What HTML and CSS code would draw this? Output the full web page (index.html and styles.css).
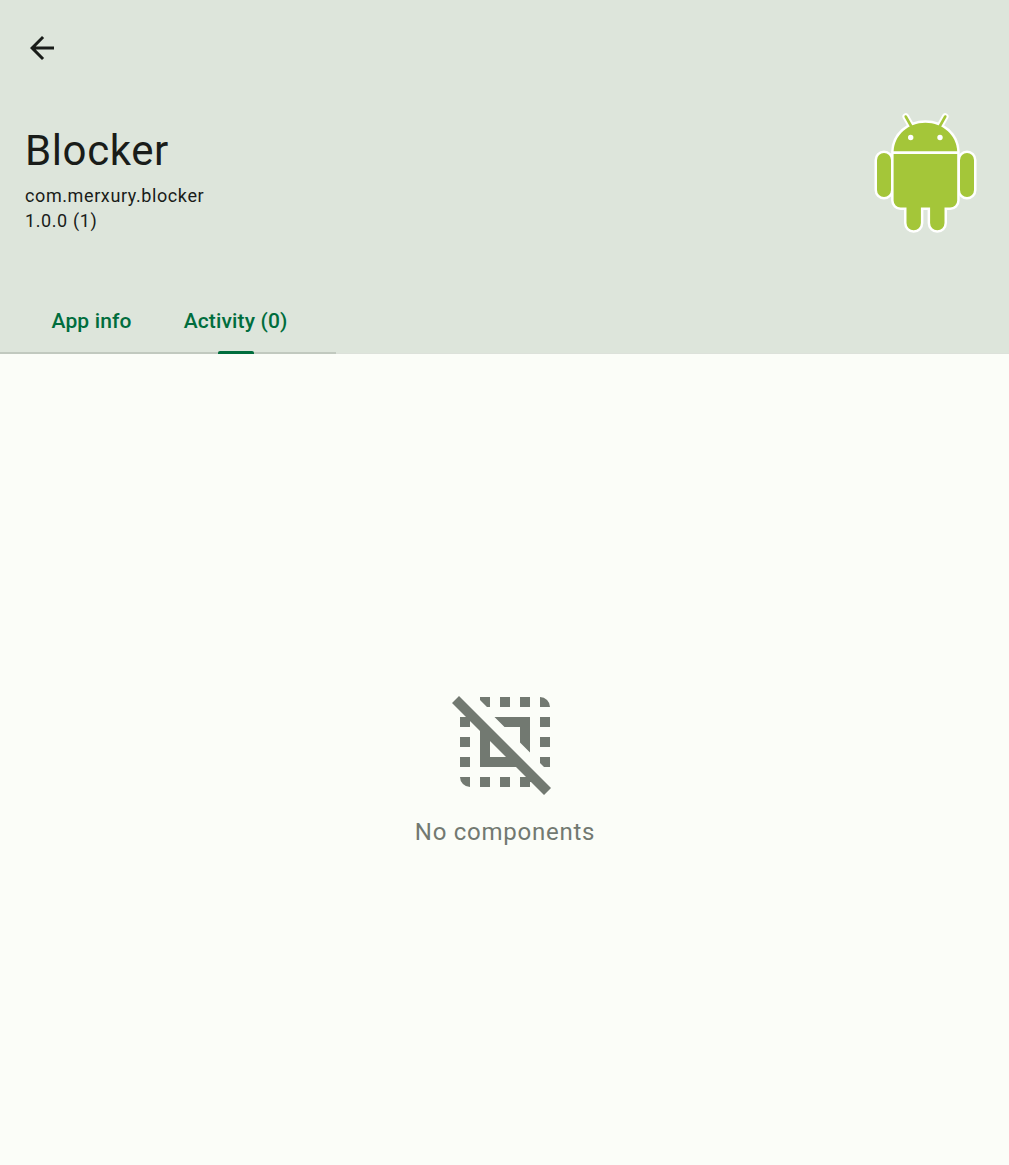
FILE: index.html
```html
<!DOCTYPE html>
<html lang="en">
<head>
<meta charset="utf-8">
<title>Blocker</title>
<link rel="stylesheet" href="styles.css">
</head>
<body>
<header class="header">
  <button class="back" aria-label="Back">
    <svg width="36" height="36" viewBox="0 0 24 24"><path d="M20 11H7.83l5.59-5.59L12 4l-8 8 8 8 1.41-1.41L7.83 13H20v-2z"/></svg>
  </button>
  <div class="summary">
    <div>
      <h1 class="title">Blocker</h1>
      <p class="detail">com.merxury.blocker</p>
      <p class="detail version">1.0.0 (1)</p>
    </div>
    <svg class="robot" width="120" height="135" viewBox="0 0 120 135">
      <g class="antenna-outline"><path d="M40.7 11.5l6.8 12M80.3 11.5l-6.8 12"/></g>
      <g class="robot-part">
        <rect x="12" y="48" width="14" height="44" rx="7"/>
        <rect x="95" y="48" width="14" height="44" rx="7"/>
        <path d="M28.6 46.5C29.2 30 43 17.7 60.4 17.7S91.6 30 92.2 46.5z"/>
        <path d="M28.6 49h63.6v46.5a7 7 0 0 1-7 7h-5.7v15.600a7.200 7.200 0 0 1-14.400 0v-15.600h-9.200v15.600a7.200 7.200 0 0 1-14.400 0v-15.600h-5.900a7 7 0 0 1-7-7z"/>
      </g>
      <path class="antenna" d="M40.7 11.500l6.800 12M80.300 11.500l-6.800 12"/>
      <circle class="eye" cx="45.7" cy="32.5" r="2.700"/>
      <circle class="eye" cx="75" cy="32.5" r="2.700"/>
    </svg>
  </div>
  <nav class="tabs">
    <a class="tab">App info</a>
    <a class="tab selected">Activity (0)</a>
  </nav>
</header>
<main class="empty">
  <svg class="empty-icon" width="120" height="120" viewBox="0 0 120 120">
    <path d="M14 14l92 92-7 7L7 21zM35 15h10v10h-3l-7-7zM55 15h10v10H55zM75 15h10v10H75zM95 15a10 10 0 0 1 10 10H95zM15 35h10v10H15zM15 55h10v10H15zM15 75h10v10H15zM15 95h10v10a10 10 0 0 1-10-10zM35 95h10v10H35zM55 95h10v10H55zM75 95h10v10H75zM95 35h10v10H95zM95 55h10v10H95zM95 75h10v10h-6l-4-4zM49.500 35H85v35.500L75 60.500V45H59.500zM35 45l10 10v20h20l10 10H35z"/>
  </svg>
  <p class="empty-text">No components</p>
</main>
</body>
</html>
```
FILE: styles.css
```css
* { box-sizing: border-box; }
body {
  margin: 0;
  min-height: 1165px;
  display: flex;
  flex-direction: column;
  background: #fbfdf8;
  color: #191c19;
  font-family: Roboto, sans-serif;
}
.header {
  height: 354px;
  display: flex;
  flex-direction: column;
  background: #dde5db;
  border-bottom: 1px solid #dce1da;
}
.back {
  width: 36px;
  height: 36px;
  margin: 30px 0 0 24px;
  padding: 0;
  border: 0;
  background: none;
}
.back svg { display: block; fill: #191c19; }
.summary {
  display: flex;
  justify-content: space-between;
  height: 135px;
  margin-top: 39px;
  padding: 0 24px 0 25px;
}
.title {
  margin: 19px 0 6px;
  font-size: 42px;
  line-height: 54px;
  font-weight: 400;
  letter-spacing: .6px;
}
.detail {
  margin: 0;
  font-size: 18px;
  line-height: 24px;
  letter-spacing: .6px;
}
.version { margin-top: 1px; }
.robot-part { fill: #a4c639; stroke: #fff; stroke-width: 5px; stroke-linejoin: round; paint-order: stroke; }
.antenna, .antenna-outline { fill: none; stroke-linecap: round; }
.antenna { stroke: #a4c639; stroke-width: 2.6px; }
.antenna-outline { stroke: #fff; stroke-width: 6.6px; }
.eye { fill: #fff; }
.tabs {
  display: flex;
  width: 336px;
  height: 72px;
  margin: auto 0 -1px;
  padding-left: 25.5px;
  border-bottom: 2px solid #c1c9bf;
}
.tab {
  position: relative;
  padding: 0 26px;
  color: #006d3d;
  font-size: 21px;
  line-height: 78px;
  font-weight: 500;
  letter-spacing: .15px;
}
.selected::after {
  content: "";
  position: absolute;
  bottom: -2px;
  left: calc(50% - 18px);
  width: 36px;
  height: 3.5px;
  border-radius: 2px 2px 0 0;
  background: #006d3d;
}
.empty {
  flex: 1;
  display: flex;
  flex-direction: column;
  align-items: center;
  padding-top: 328px;
}
.empty-icon { fill: #727971; }
.empty-text {
  margin: 12px 0 0;
  padding-left: 1px;
  color: #727971;
  font-size: 24px;
  line-height: 36px;
  letter-spacing: .75px;
}
```
